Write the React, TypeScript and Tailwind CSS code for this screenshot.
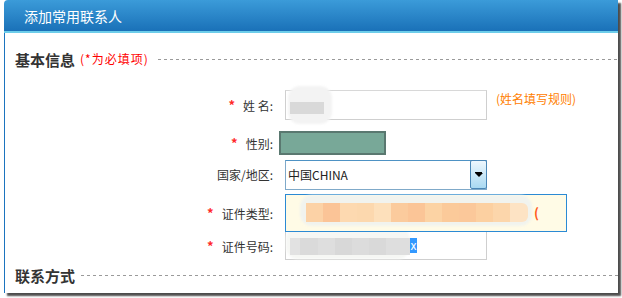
import React from "react";

const font = { fontFamily: '"Noto Sans CJK SC", "Noto Sans", sans-serif' };

function Star() {
  return <span className="text-[#ff2a2a] text-[13px] font-bold mr-[8px] relative top-[-1px]">*</span>;
}

function Label({ star, children, w = "w-[268px]" }: { star?: boolean; children: React.ReactNode; w?: string }) {
  return (
    <div className={`${w} shrink-0 text-right text-[12px] text-[#333] leading-none`}>
      {star && <Star />}
      {children}
    </div>
  );
}

function Dashed() {
  return <div className="flex-1 h-px bg-[repeating-linear-gradient(90deg,#9a9a9a_0_3px,transparent_3px_6px)]" />;
}

export default function App() {
  return (
    <div className="w-[622px] h-[298px] bg-white relative overflow-hidden" style={font}>
      <div className="ml-[4px] w-[614px] h-[293px] bg-white shadow-[3px_3px_2px_rgba(0,0,0,0.7)] flex flex-col rounded-tl-[4px]">
        {/* header */}
        <div className="h-[33px] shrink-0 rounded-tl-[4px] bg-[linear-gradient(#3b9bd9,#1a71b8)] border-b-[2px] border-[#6dcdea] flex items-center pl-[20px]">
          <span className="text-white text-[14px] leading-none">添加常用联系人</span>
        </div>
        {/* body */}
        <div className="flex-1 border-l border-[#1b74bf] flex flex-col">
          {/* section title */}
          <div className="mt-[17px] h-[18px] flex items-center pl-[10px]">
            <span className="text-[15px] font-bold text-[#333] leading-none">基本信息</span>
            <span className="text-[12px] text-[#f00] leading-none ml-[5px] mr-[9px] tracking-[1px]">(*为必填项)</span>
            <Dashed />
          </div>

          {/* row 1 */}
          <div className="mt-[22px] h-[30px] flex items-center">
            <Label star>姓&nbsp;名:</Label>
            <div className="ml-[12px] w-[202px] h-[30px] border border-[#cfcfcf] border-t-[#d8d8d8] relative bg-white">
              <div className="absolute left-[2px] top-[-5px] w-[44px] h-[38px] rounded-[12px] bg-[#f3f3f3] blur-[1px]" />
              <div className="absolute left-[4px] top-[11px] w-[34px] h-[12px] bg-[#d9d9d9]" />
            </div>
            <span className="ml-[9px] text-[12px] text-[#ff8000] leading-none self-start mt-[3px]">(姓名填写规则)</span>
          </div>

          {/* row 2 */}
          <div className="mt-[11px] h-[24px] flex items-center">
            <Label star>性别:</Label>
            <div className="ml-[6px] w-[107px] h-[24px] bg-[#78a898] border-[2px] border-[#5a7870]" />
          </div>

          {/* row 3 */}
          <div className="mt-[5px] h-[30px] flex items-center">
            <Label>国家/地区:</Label>
            <div className="ml-[12px] w-[202px] h-[30px] border border-[#7fa9c9] border-t-[#4e92c4] flex items-center bg-white">
              <span className="pl-[2px] flex-1 text-[12px] text-[#222] leading-none">中国CHINA</span>
              <div className="w-[17px] h-[29px] -mt-px -mr-px border border-[#4a86b6] rounded-[2px] bg-[linear-gradient(#eef7fd,#a9d9f2)] flex flex-col items-center justify-center">
                <div className="w-[7px] h-px bg-black" />
                <div className="w-0 h-0 border-l-[4px] border-r-[4px] border-t-[4px] border-l-transparent border-r-transparent border-t-black" />
              </div>
            </div>
          </div>

          {/* row 4 */}
          <div className="mt-[4px] h-[38px] flex items-center relative z-10">
            <Label star>证件类型:</Label>
            <div className="ml-[12px] w-[282px] h-[38px] border border-[#2b8ad4] bg-[#fffbe6] relative">
              <div className="absolute left-[14px] top-[0px] w-[232px] h-[31px] rounded-[12px] bg-[#f1f3ee] blur-[1px]" />
              <div className="absolute left-[20px] top-[8px] w-[222px] h-[19px] flex">
                <div className="w-[17px] bg-[#fcd2a6]" />
                <div className="w-[17px] bg-[#fbc497]" />
                <div className="w-[17px] bg-[#fdd9b0]" />
                <div className="w-[17px] bg-[#fcd8ae]" />
                <div className="w-[17px] bg-[#fde0bb]" />
                <div className="w-[17px] bg-[#fbcb9d]" />
                <div className="w-[17px] bg-[#fbc597]" />
                <div className="w-[17px] bg-[#fcd3a4]" />
                <div className="w-[17px] bg-[#fbca9a]" />
                <div className="w-[17px] bg-[#fbc89a]" />
                <div className="w-[17px] bg-[#fcd0a1]" />
                <div className="w-[17px] bg-[#fcd6ab]" />
                <div className="w-[18px] bg-[#fde3c4] rounded-r-[6px]" />
              </div>
              <span className="absolute left-[248px] top-[11px] text-[13px] font-bold leading-none text-[#ff5a1a]">(</span>
            </div>
          </div>

          {/* row 5 */}
          <div className="h-[28px] flex items-center">
            <Label star>证件号码:</Label>
            <div className="ml-[12px] w-[202px] h-[28px] border border-t-0 border-[#cfcfcf] relative bg-white">
              <div className="absolute left-[0px] top-[-5px] w-[124px] h-[32px] rounded-[12px] bg-[#f6f7f4] blur-[1px]" />
              <div className="absolute left-[4px] top-[6px] w-[120px] h-[17px] flex">
                <div className="w-[10px] bg-[#e2e2e2]" />
                <div className="w-[18px] bg-[#dadada]" />
                <div className="w-[17px] bg-[#dedede]" />
                <div className="w-[17px] bg-[#d8d8d8]" />
                <div className="w-[17px] bg-[#dcdcdc]" />
                <div className="w-[17px] bg-[#d9d9d9]" />
                <div className="w-[24px] bg-[#dedede]" />
              </div>
              <span className="absolute left-[124px] top-[6px] h-[15px] w-[7px] bg-[#3399ff] text-white text-[12px] leading-[14px] text-center">x</span>
            </div>
          </div>

          {/* section 2 */}
          <div className="mt-[7px] h-[16px] flex items-center pl-[10px]">
            <span className="text-[15px] font-bold text-[#333] leading-none mr-[6px]">联系方式</span>
            <Dashed />
          </div>
        </div>
      </div>
    </div>
  );
}
